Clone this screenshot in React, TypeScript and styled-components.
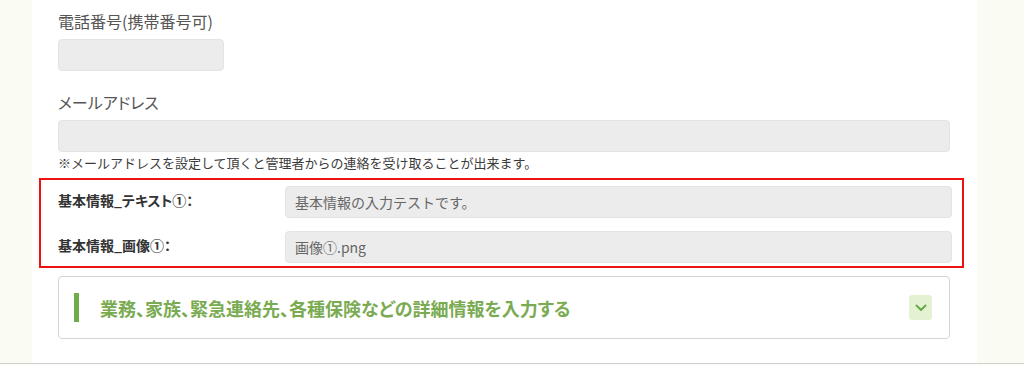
import React from "react";
import styled, { createGlobalStyle } from "styled-components";

const GlobalStyle = createGlobalStyle`
  html, body {
    margin: 0;
    padding: 0;
    background: #fafcf4;
    font-family: "Noto Sans CJK JP", "Noto Sans", sans-serif;
  }
`;

const Page = styled.div`
  padding: 0 47px 0 32px;
  border-bottom: 1px solid #cfcfcf;
`;

const Panel = styled.div`
  background: #fff;
  padding: 9px 27px 24px 26px;
`;

const FieldLabel = styled.div<{ $gap?: number }>`
  font-size: 16px;
  line-height: 24px;
  color: #555;
  margin-top: ${(p) => p.$gap ?? 0}px;
  margin-bottom: 6px;
  font-feature-settings: "palt";
`;

const TextInput = styled.div<{ $width?: string }>`
  box-sizing: border-box;
  width: ${(p) => p.$width ?? "100%"};
  height: 32px;
  background: #ececec;
  border: 1px solid #e4e4e4;
  border-radius: 4px;
  padding: 0 9px;
  display: flex;
  align-items: center;
  font-size: 14px;
  color: #666;
`;

const Note = styled.div`
  font-size: 13px;
  line-height: 20px;
  color: #3c3c3c;
  margin-top: 1px;
`;

const HighlightBox = styled.div`
  border: 2px solid #ee1111;
  margin: 5px -14px 0 -19px;
  padding: 6px 10px 3px 17px;
  display: flex;
  flex-direction: column;
  gap: 13px;
`;

const InfoRow = styled.div`
  display: grid;
  grid-template-columns: 227px 1fr;
  align-items: center;
`;

const RowLabel = styled.div`
  font-size: 14px;
  font-weight: 700;
  color: #333;
  margin-top: -4px;
  font-feature-settings: "palt";
`;

const Accordion = styled.div`
  margin-top: 8px;
  height: 63px;
  box-sizing: border-box;
  border: 1px solid #d4d4d4;
  border-radius: 4px;
  display: flex;
  align-items: center;
  padding: 0 17px 0 15px;
`;

const AccentBar = styled.span`
  width: 5px;
  height: 29px;
  background: #6dac48;
  margin-right: 21px;
`;

const AccordionTitle = styled.div`
  flex: 1;
  font-size: 18px;
  font-weight: 700;
  color: #7aab52;
  font-feature-settings: "palt";
`;

const ToggleButton = styled.div`
  width: 23px;
  height: 25px;
  border-radius: 3px;
  background: #e4f2d2;
  display: flex;
  align-items: center;
  justify-content: center;
`;

const infoRows = [
  { label: "基本情報_テキスト①：", value: "基本情報の入力テストです。" },
  { label: "基本情報_画像①：", value: "画像①.png" },
];

export default function App() {
  return (
    <>
      <GlobalStyle />
      <Page>
        <Panel>
          <FieldLabel>電話番号(携帯番号可)</FieldLabel>
          <TextInput $width="166px" />
          <FieldLabel $gap={19}>メールアドレス</FieldLabel>
          <TextInput />
          <Note>※メールアドレスを設定して頂くと管理者からの連絡を受け取ることが出来ます。</Note>

          <HighlightBox>
            {infoRows.map((row) => (
              <InfoRow key={row.label}>
                <RowLabel>{row.label}</RowLabel>
                <TextInput>{row.value}</TextInput>
              </InfoRow>
            ))}
          </HighlightBox>

          <Accordion>
            <AccentBar />
            <AccordionTitle>
              業務、家族、緊急連絡先、各種保険などの詳細情報を入力する
            </AccordionTitle>
            <ToggleButton>
              <svg width="12" height="8" viewBox="0 0 12 8" fill="none">
                <path
                  d="M1.5 1.5 L6 6 L10.5 1.5"
                  stroke="#6aa84a"
                  strokeWidth="2"
                  strokeLinecap="round"
                  strokeLinejoin="round"
                />
              </svg>
            </ToggleButton>
          </Accordion>
        </Panel>
      </Page>
    </>
  );
}
